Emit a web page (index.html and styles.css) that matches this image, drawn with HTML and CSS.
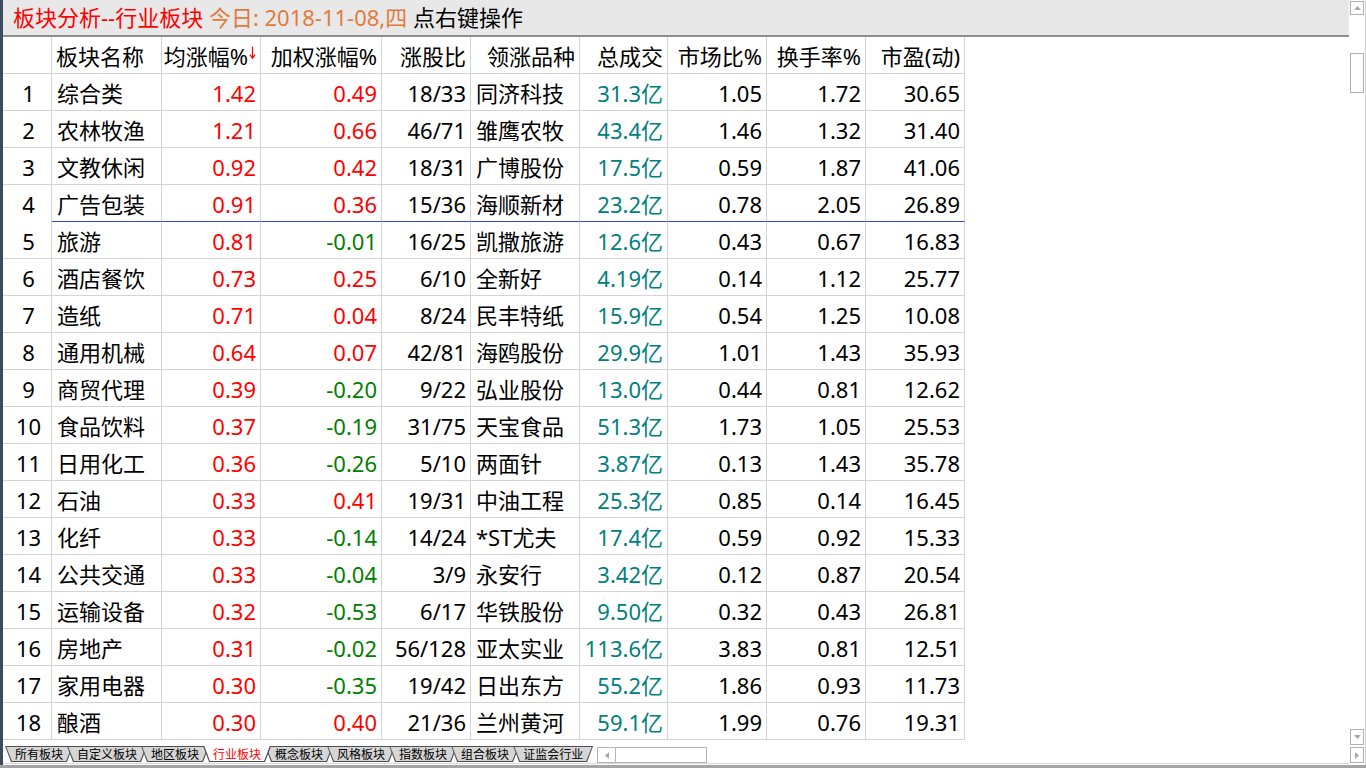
FILE: index.html
```html
<!DOCTYPE html>
<html lang="zh-CN">
<head>
<meta charset="utf-8">
<title>板块分析--行业板块</title>
<link rel="stylesheet" href="styles.css">
</head>
<body>
<div class="screen">
  <div class="window">
    <div class="main">
      <div class="titlebar"><span class="t-red">板块分析--行业板块</span> <span class="t-orange">今日: 2018-11-08,四</span> <span class="t-black">点右键操作</span></div>
      <div class="grid">
        <div class="row">
          <div class="c n"></div>
          <div class="c nm hl">板块名称</div>
          <div class="c">均涨幅%<svg class="sort" width="7" height="13" viewBox="0 0 7 13"><path d="M3.5 0.5V12M0.9 8.6L3.5 12.2L6.1 8.6" stroke="#ff0000" stroke-width="1.2" fill="none"/></svg></div>
          <div class="c">加权涨幅%</div>
          <div class="c">涨股比</div>
          <div class="c">领涨品种</div>
          <div class="c">总成交</div>
          <div class="c">市场比%</div>
          <div class="c">换手率%</div>
          <div class="c">市盈(动)</div>
        </div>
        <div class="row"><div class="c n">1</div><div class="c nm">综合类</div><div class="c r">1.42</div><div class="c r">0.49</div><div class="c">18/33</div><div class="c ld">同济科技</div><div class="c t">31.3亿</div><div class="c">1.05</div><div class="c">1.72</div><div class="c">30.65</div></div>
        <div class="row"><div class="c n">2</div><div class="c nm">农林牧渔</div><div class="c r">1.21</div><div class="c r">0.66</div><div class="c">46/71</div><div class="c ld">雏鹰农牧</div><div class="c t">43.4亿</div><div class="c">1.46</div><div class="c">1.32</div><div class="c">31.40</div></div>
        <div class="row"><div class="c n">3</div><div class="c nm">文教休闲</div><div class="c r">0.92</div><div class="c r">0.42</div><div class="c">18/31</div><div class="c ld">广博股份</div><div class="c t">17.5亿</div><div class="c">0.59</div><div class="c">1.87</div><div class="c">41.06</div></div>
        <div class="row sel"><div class="c n">4</div><div class="c nm">广告包装</div><div class="c r">0.91</div><div class="c r">0.36</div><div class="c">15/36</div><div class="c ld">海顺新材</div><div class="c t">23.2亿</div><div class="c">0.78</div><div class="c">2.05</div><div class="c">26.89</div></div>
        <div class="row"><div class="c n">5</div><div class="c nm">旅游</div><div class="c r">0.81</div><div class="c g">-0.01</div><div class="c">16/25</div><div class="c ld">凯撒旅游</div><div class="c t">12.6亿</div><div class="c">0.43</div><div class="c">0.67</div><div class="c">16.83</div></div>
        <div class="row"><div class="c n">6</div><div class="c nm">酒店餐饮</div><div class="c r">0.73</div><div class="c r">0.25</div><div class="c">6/10</div><div class="c ld">全新好</div><div class="c t">4.19亿</div><div class="c">0.14</div><div class="c">1.12</div><div class="c">25.77</div></div>
        <div class="row"><div class="c n">7</div><div class="c nm">造纸</div><div class="c r">0.71</div><div class="c r">0.04</div><div class="c">8/24</div><div class="c ld">民丰特纸</div><div class="c t">15.9亿</div><div class="c">0.54</div><div class="c">1.25</div><div class="c">10.08</div></div>
        <div class="row"><div class="c n">8</div><div class="c nm">通用机械</div><div class="c r">0.64</div><div class="c r">0.07</div><div class="c">42/81</div><div class="c ld">海鸥股份</div><div class="c t">29.9亿</div><div class="c">1.01</div><div class="c">1.43</div><div class="c">35.93</div></div>
        <div class="row"><div class="c n">9</div><div class="c nm">商贸代理</div><div class="c r">0.39</div><div class="c g">-0.20</div><div class="c">9/22</div><div class="c ld">弘业股份</div><div class="c t">13.0亿</div><div class="c">0.44</div><div class="c">0.81</div><div class="c">12.62</div></div>
        <div class="row"><div class="c n">10</div><div class="c nm">食品饮料</div><div class="c r">0.37</div><div class="c g">-0.19</div><div class="c">31/75</div><div class="c ld">天宝食品</div><div class="c t">51.3亿</div><div class="c">1.73</div><div class="c">1.05</div><div class="c">25.53</div></div>
        <div class="row"><div class="c n">11</div><div class="c nm">日用化工</div><div class="c r">0.36</div><div class="c g">-0.26</div><div class="c">5/10</div><div class="c ld">两面针</div><div class="c t">3.87亿</div><div class="c">0.13</div><div class="c">1.43</div><div class="c">35.78</div></div>
        <div class="row"><div class="c n">12</div><div class="c nm">石油</div><div class="c r">0.33</div><div class="c r">0.41</div><div class="c">19/31</div><div class="c ld">中油工程</div><div class="c t">25.3亿</div><div class="c">0.85</div><div class="c">0.14</div><div class="c">16.45</div></div>
        <div class="row"><div class="c n">13</div><div class="c nm">化纤</div><div class="c r">0.33</div><div class="c g">-0.14</div><div class="c">14/24</div><div class="c ld">*ST尤夫</div><div class="c t">17.4亿</div><div class="c">0.59</div><div class="c">0.92</div><div class="c">15.33</div></div>
        <div class="row"><div class="c n">14</div><div class="c nm">公共交通</div><div class="c r">0.33</div><div class="c g">-0.04</div><div class="c">3/9</div><div class="c ld">永安行</div><div class="c t">3.42亿</div><div class="c">0.12</div><div class="c">0.87</div><div class="c">20.54</div></div>
        <div class="row"><div class="c n">15</div><div class="c nm">运输设备</div><div class="c r">0.32</div><div class="c g">-0.53</div><div class="c">6/17</div><div class="c ld">华铁股份</div><div class="c t">9.50亿</div><div class="c">0.32</div><div class="c">0.43</div><div class="c">26.81</div></div>
        <div class="row"><div class="c n">16</div><div class="c nm">房地产</div><div class="c r">0.31</div><div class="c g">-0.02</div><div class="c">56/128</div><div class="c ld">亚太实业</div><div class="c t">113.6亿</div><div class="c">3.83</div><div class="c">0.81</div><div class="c">12.51</div></div>
        <div class="row"><div class="c n">17</div><div class="c nm">家用电器</div><div class="c r">0.30</div><div class="c g">-0.35</div><div class="c">19/42</div><div class="c ld">日出东方</div><div class="c t">55.2亿</div><div class="c">1.86</div><div class="c">0.93</div><div class="c">11.73</div></div>
        <div class="row"><div class="c n">18</div><div class="c nm">酿酒</div><div class="c r">0.30</div><div class="c r">0.40</div><div class="c">21/36</div><div class="c ld">兰州黄河</div><div class="c t">59.1亿</div><div class="c">1.99</div><div class="c">0.76</div><div class="c">19.31</div></div>
      </div>
      <div class="gap"></div>
      <div class="tabstrip">
        <div class="tab"><div class="tab-in">所有板块</div></div>
        <div class="tab"><div class="tab-in">自定义板块</div></div>
        <div class="tab"><div class="tab-in">地区板块</div></div>
        <div class="tab active"><div class="tab-in">行业板块</div></div>
        <div class="tab"><div class="tab-in">概念板块</div></div>
        <div class="tab"><div class="tab-in">风格板块</div></div>
        <div class="tab"><div class="tab-in">指数板块</div></div>
        <div class="tab"><div class="tab-in">组合板块</div></div>
        <div class="tab"><div class="tab-in">证监会行业</div></div>
        <div class="hbtn"><svg width="4" height="7" viewBox="0 0 4 7"><polygon points="4,0 0,3.5 4,7" fill="#a8a8a8"/></svg></div>
        <div class="hthumb"></div>
      </div>
    </div>
    <div class="vscroll">
      <div class="sbtn up"><svg width="7" height="4" viewBox="0 0 7 4"><polygon points="0,4 3.5,0 7,4" fill="#a8a8a8"/></svg></div>
      <div class="sbtn thumb"></div>
      <div class="vfill"></div>
      <div class="sbtn down"><svg width="7" height="4" viewBox="0 0 7 4"><polygon points="0,0 7,0 3.5,4" fill="#a8a8a8"/></svg></div>
      <div class="sbtn right"><svg width="4" height="7" viewBox="0 0 4 7"><polygon points="0,0 4,3.5 0,7" fill="#a8a8a8"/></svg></div>
    </div>
    <div class="rborder"></div>
  </div>
  <div class="bottombar"></div>
</div>
</body>
</html>
```

FILE: styles.css
```css
* { box-sizing: border-box; }
html, body { margin: 0; padding: 0; }
body {
  width: 1366px;
  height: 768px;
  overflow: hidden;
  background: #ffffff;
  font-family: "Noto Sans", "Noto Sans CJK SC", sans-serif;
  color: #000;
}
.screen { display: flex; flex-direction: column; height: 768px; }
.window { display: flex; height: 765px; }
.main {
  width: 1349px;
  border-left: 3px solid #3c4b60;
  display: flex;
  flex-direction: column;
}
.titlebar {
  height: 37px;
  flex: none;
  background: #e8e8e8;
  border-bottom: 2px solid #8e8e8e;
  padding-left: 10px;
  font-size: 22px;
  line-height: 35px;
  white-space: nowrap;
}
.t-red { color: #ff0000; }
.t-orange { color: #e27a3e; }
.t-black { color: #000; }

.grid { flex: none; display: flex; flex-direction: column; }
.row {
  display: grid;
  grid-template-columns: 49px 110px 99px 121px 89px 109px 88px 99px 99px 99px;
  width: 962px;
  height: 37px;
}
.c {
  border-right: 1px solid #d4d4d4;
  border-bottom: 1px solid #d4d4d4;
  font-size: 22px;
  line-height: 34px;
  padding-top: 2px;
  padding-right: 4px;
  text-align: right;
  white-space: nowrap;
  overflow: hidden;
}
.c.n { text-align: center; padding-right: 0; padding-left: 3px; }
.c.nm, .c.ld { text-align: left; padding-left: 5px; padding-right: 0; }
.c.hl { padding-left: 4px; }
.r { color: #ff0000; }
.g { color: #008000; }
.t { color: #008080; }
.row.sel .c { border-bottom-color: #3344ee; }
.row.sel .c.n { border-bottom-color: #ffffff; }
.sort { vertical-align: 6px; margin-left: 1px; }

.gap { height: 6px; flex: none; }
.tabstrip {
  height: 18px;
  flex: none;
  border-bottom: 1px solid #d6d6d6;
  margin-bottom: 1px;
  padding-left: 2px;
  display: flex;
  align-items: flex-start;
}
.tab {
  flex: none;
  height: 16px;
  margin-left: -6px;
  background: #4e4e4e;
  clip-path: polygon(0 0, 100% 0, calc(100% - 6px) 100%, 6px 100%);
}
.tab:first-child { margin-left: 0; }
.tab-in {
  height: 16px;
  padding: 0 10px;
  background: #d6d6d6;
  clip-path: polygon(1.3px 1px, calc(100% - 1.3px) 1px, calc(100% - 6.9px) 15px, 6.9px 15px);
  font-family: "Noto Sans CJK SC", sans-serif;
  font-size: 12px;
  line-height: 16px;
  color: #000;
  white-space: nowrap;
}
.tab.active { z-index: 2; }
.tab.active .tab-in {
  background: #ffffff;
  color: #ff0000;
  clip-path: polygon(1.3px 0, calc(100% - 1.3px) 0, calc(100% - 6.9px) 15px, 6.9px 15px);
}
.hbtn {
  flex: none;
  margin-left: 4px;
  margin-top: 1px;
  width: 19px;
  height: 16px;
  border: 1px solid #b4b4b4;
  background: #fff;
  display: flex;
  align-items: center;
  justify-content: center;
}
.hthumb {
  flex: none;
  margin-left: -1px;
  margin-top: 1px;
  width: 92px;
  height: 16px;
  border: 1px solid #b4b4b4;
  background: #fff;
}

.vscroll {
  width: 16px;
  flex: none;
  display: flex;
  flex-direction: column;
  align-items: flex-start;
  padding-left: 1px;
}
.sbtn {
  flex: none;
  width: 14px;
  border: 1px solid #b0b0b0;
  background: #fff;
  display: flex;
  align-items: center;
  justify-content: center;
}
.up { margin-top: 1px; height: 14px; }
.thumb { margin-top: 38px; height: 40px; }
.vfill { flex: 1; }
.down { height: 16px; }
.right { margin-top: 2px; height: 16px; margin-bottom: 2px; }
.rborder { width: 1px; flex: none; background: #d4d4d4; }
.bottombar { height: 3px; flex: none; background: #a4a4a4; }
```
